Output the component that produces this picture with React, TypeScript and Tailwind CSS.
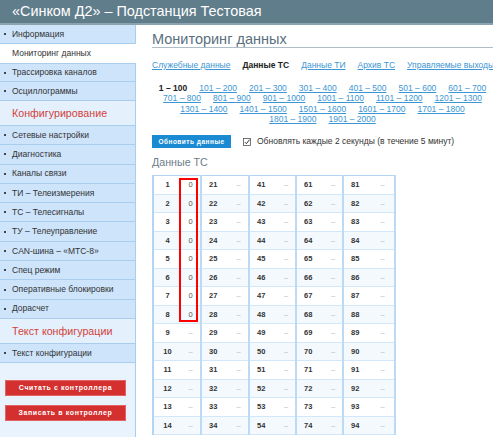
import React from "react";

const topItems = ["Информация", "Мониторинг данных", "Трассировка каналов", "Осциллограммы"];
const confItems = [
  "Сетевые настройки",
  "Диагностика",
  "Каналы связи",
  "ТИ – Телеизмерения",
  "ТС – Телесигналы",
  "ТУ – Телеуправление",
  "CAN-шина – «МТС-8»",
  "Спец режим",
  "Оперативные блокировки",
  "Дорасчет",
];

const pageRows = [
  ["1 – 100", "101 – 200", "201 – 300", "301 – 400", "401 – 500", "501 – 600", "601 – 700"],
  ["701 – 800", "801 – 900", "901 – 1000", "1001 – 1100", "1101 – 1200", "1201 – 1300"],
  ["1301 – 1400", "1401 – 1500", "1501 – 1600", "1601 – 1700", "1701 – 1800"],
  ["1801 – 1900", "1901 – 2000"],
];

function SideItem({ label, active }: { label: string; active?: boolean }) {
  if (active) {
    return (
      <div className="h-[19px] bg-white flex items-center pl-[12px] text-[8.5px] text-[#333] mr-[-1px] relative">
        {label}
      </div>
    );
  }
  return (
    <div className="h-[19.3px] bg-[#cde4fb] border-b border-[#a9cdef] flex items-center text-[8.5px] text-[#333]">
      <span className="w-[2px] h-[2px] bg-[#444] ml-[4px] mr-[6px]" />
      {label}
    </div>
  );
}

function SideHeader({ label }: { label: string }) {
  return (
    <div className="h-[25px] bg-[#e4f1fd] border-b border-[#a9cdef] flex items-center pl-[12px] text-[10.7px] text-[#d5413b]">
      {label}
    </div>
  );
}

export default function App() {
  const rows = Array.from({ length: 14 }, (_, i) => i + 1);
  return (
    <div className="w-[493px] h-[437px] overflow-hidden bg-white font-['Liberation_Sans',Arial,sans-serif] flex flex-col">
      <div className="h-[25px] shrink-0 bg-[#607d8b] border-b-2 border-[#8aa3af] text-white text-[14.4px] pl-[12px] flex items-center">
        «Синком Д2» – Подстанция Тестовая
      </div>
      <div className="flex flex-1 min-h-0">
        <aside className="w-[136px] shrink-0 bg-[#e8f3fd] border-r border-[#a9cdef] flex flex-col">
          <div className="h-[19px] bg-[#cde4fb] border-b border-[#a9cdef] flex items-center text-[8.5px] text-[#333]">
            <span className="w-[2px] h-[2px] bg-[#444] ml-[4px] mr-[6px]" />
            {topItems[0]}
          </div>
          <SideItem label={topItems[1]} active />
          <div className="h-[19px] bg-[#cde4fb] border-y border-[#a9cdef] flex items-center text-[8.5px] text-[#333]">
            <span className="w-[2px] h-[2px] bg-[#444] ml-[4px] mr-[6px]" />
            {topItems[2]}
          </div>
          <div className="h-[19px] bg-[#cde4fb] border-b border-[#a9cdef] flex items-center text-[8.5px] text-[#333]">
            <span className="w-[2px] h-[2px] bg-[#444] ml-[4px] mr-[6px]" />
            {topItems[3]}
          </div>
          <SideHeader label="Конфигурирование" />
          {confItems.map((c) => (
            <SideItem key={c} label={c} />
          ))}
          <SideHeader label="Текст конфигурации" />
          <SideItem label="Текст конфигурации" />
          <div className="flex flex-col gap-[9px] pt-[17px] pl-[5px]">
            <button className="w-[121px] h-[16px] bg-[#d3302f] border border-[#e26462] text-white text-[7px] font-bold tracking-[0.6px] flex items-center justify-center">
              Считать с контроллера
            </button>
            <button className="w-[121px] h-[16px] bg-[#d3302f] border border-[#e26462] text-white text-[7px] font-bold tracking-[0.6px] flex items-center justify-center">
              Записать в контроллер
            </button>
          </div>
        </aside>
        <main className="flex-1 min-w-0 pl-[16px] overflow-hidden">
          <div className="pt-[6px] h-[23px] border-b border-[#aebdc6] text-[14.5px] text-[#5b6f7d] leading-[17px] whitespace-nowrap">
            Мониторинг данных
          </div>
          <div className="flex gap-[12px] whitespace-nowrap text-[8.5px] pt-[12px] leading-[10px]">
            <a className="text-[#3c96d4] underline">Служебные данные</a>
            <span className="font-bold text-[#222]">Данные ТС</span>
            <a className="text-[#3c96d4] underline">Данные ТИ</a>
            <a className="text-[#3c96d4] underline">Архив ТС</a>
            <a className="text-[#3c96d4] underline">Управляемые выходы</a>
          </div>
          <div className="pt-[13px] flex flex-col text-[8.5px] leading-[10.3px]">
            {pageRows.map((r, i) => (
              <div key={i} className="flex justify-center gap-x-[12px] whitespace-nowrap">
                {r.map((p) =>
                  p === "1 – 100" ? (
                    <span key={p} className="font-bold text-[#222]">
                      {p}
                    </span>
                  ) : (
                    <a key={p} className="text-[#3c96d4] underline">
                      {p}
                    </a>
                  )
                )}
              </div>
            ))}
          </div>
          <div className="flex items-center pt-[11px]">
            <button className="w-[79px] h-[13px] bg-[#1a8bd3] text-white text-[6.5px] font-bold tracking-[0.5px] flex items-center justify-center">
              Обновить данные
            </button>
            <svg width="8" height="8" viewBox="0 0 8 8" className="ml-[12px]">
              <rect x="0.5" y="0.5" width="7" height="7" fill="white" stroke="#555" strokeWidth="0.8" />
              <path d="M1.8 4.1 L3.4 5.7 L6.6 1.6" fill="none" stroke="#333" strokeWidth="1" />
            </svg>
            <span className="ml-[6px] text-[8.5px] text-[#333] whitespace-nowrap">
              Обновлять каждые 2 секунды (в течение 5 минут)
            </span>
          </div>
          <div className="pt-[8px] text-[10.7px] text-[#6b7c88] leading-[12px]">Данные ТС</div>
          <div className="relative mt-[7px] w-[242px]">
            <table className="border-collapse border-l-2 border-t border-r border-[#b3d5f3] w-[242px] table-fixed">
              <colgroup>
                <col className="w-[28px]" />
                <col className="w-[20px]" />
                <col className="w-[28px]" />
                <col className="w-[20px]" />
                <col className="w-[28px]" />
                <col className="w-[19px]" />
                <col className="w-[28px]" />
                <col className="w-[19px]" />
                <col className="w-[28px]" />
                <col className="w-[24px]" />
              </colgroup>
              <tbody>
                {rows.map((r, ri) => (
                  <tr key={r} className={`h-[18.5px] border-b border-[#d2e7f9] ${ri % 2 === 1 ? "bg-[#f4f9fe]" : "bg-white"}`}>
                    {[0, 1, 2, 3, 4].map((g) => (
                      <React.Fragment key={g}>
                        <td className={`text-[7.5px] font-bold text-[#333] p-0 ${g === 0 ? "text-center" : "pl-[7px]"}`}>
                          {r + g * 20}
                        </td>
                        <td className={`text-center text-[7.5px] p-0 border-r-2 border-[#bcdaf4] ${g === 0 && r <= 8 ? "text-[#555]" : "text-[#bbb]"}`}>
                          {g === 0 && r <= 8 ? "0" : "–"}
                        </td>
                      </React.Fragment>
                    ))}
                  </tr>
                ))}
              </tbody>
            </table>
            <div className="absolute left-[27px] top-[3px] w-[19px] h-[144px] border-2 border-[#ff0000]" />
          </div>
        </main>
      </div>
    </div>
  );
}
